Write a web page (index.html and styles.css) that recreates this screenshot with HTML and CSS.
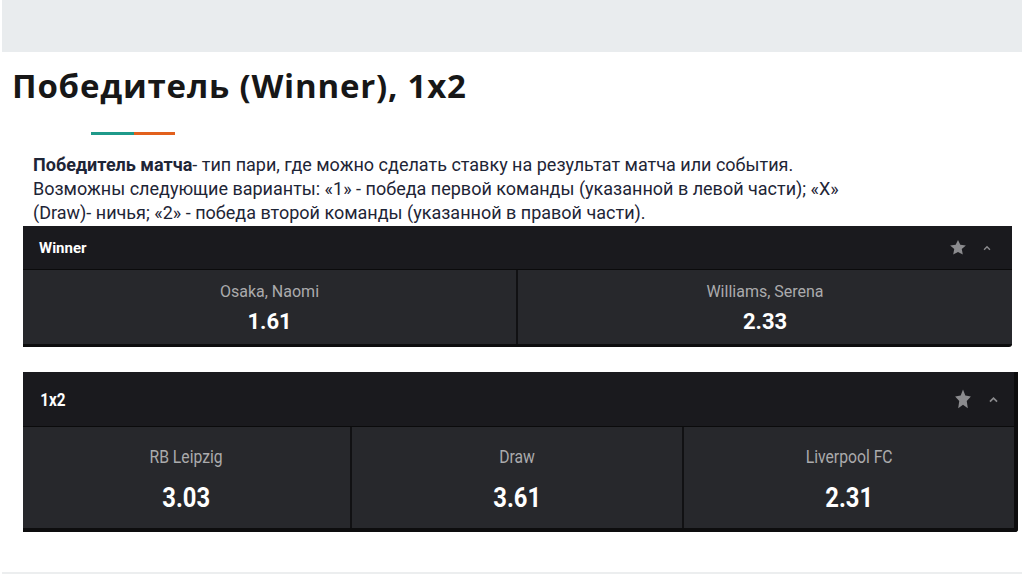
FILE: index.html
```html
<!DOCTYPE html>
<html lang="ru">
<head>
<meta charset="utf-8">
<title>Победитель (Winner), 1x2</title>
<link rel="stylesheet" href="styles.css">
</head>
<body>
<div class="topbar"></div>
<main class="content">
  <h1 class="title">Победитель (Winner), 1x2</h1>
  <div class="accent"><span class="teal"></span><span class="orange"></span></div>
  <p class="desc"><b>Победитель матча</b>- тип пари, где можно сделать ставку на результат матча или события.<br>Возможны следующие варианты: «1» - победа первой команды (указанной в левой части); «X»<br>(Draw)- ничья; «2» - победа второй команды (указанной в правой части).</p>

  <section class="market m1">
    <div class="mhead">
      <span class="mtitle">Winner</span>
      <div class="micons">
        <svg class="star" viewBox="0 0 24 24" preserveAspectRatio="none"><polygon points="12,1.5 15.09,8.26 22.5,9.27 17,14.14 18.4,22 12,18.3 5.6,22 7,14.14 1.5,9.27 8.91,8.26"/></svg>
        <svg class="chev" viewBox="0 0 24 24"><polyline points="7,15 12,10 17,15"/></svg>
      </div>
    </div>
    <div class="mbody">
      <div class="cell"><span class="name">Osaka, Naomi</span><span class="odd">1.61</span></div>
      <div class="cell"><span class="name">Williams, Serena</span><span class="odd">2.33</span></div>
    </div>
  </section>

  <section class="market m2">
    <div class="mhead">
      <span class="mtitle"><span class="cond">1x2</span></span>
      <div class="micons">
        <svg class="star" viewBox="0 0 24 24" preserveAspectRatio="none"><polygon points="12,1.5 15.09,8.26 22.5,9.27 17,14.14 18.4,22 12,18.3 5.6,22 7,14.14 1.5,9.27 8.91,8.26"/></svg>
        <svg class="chev" viewBox="0 0 24 24"><polyline points="7,15 12,10 17,15"/></svg>
      </div>
    </div>
    <div class="mbody">
      <div class="cell"><span class="name"><span class="cond">RB Leipzig</span></span><span class="odd"><span class="cond">3.03</span></span></div>
      <div class="cell"><span class="name"><span class="cond">Draw</span></span><span class="odd"><span class="cond">3.61</span></span></div>
      <div class="cell"><span class="name"><span class="cond">Liverpool FC</span></span><span class="odd"><span class="cond">2.31</span></span></div>
    </div>
  </section>
</main>
<div class="bottomline"></div>
</body>
</html>
```

FILE: styles.css
```css
* { box-sizing: border-box; }
html, body { margin: 0; padding: 0; }
body {
  width: 1024px;
  height: 574px;
  overflow: hidden;
  background: #ffffff;
  font-family: Roboto, "Liberation Sans", sans-serif;
}
.topbar {
  height: 52px;
  margin: 0 2px 0 2px;
  background: #e9ecee;
}
.content {
  height: 520px;
  display: flex;
  flex-direction: column;
}
.title {
  margin: 14px 0 0 12px;
  font-family: "Open Sans", "Liberation Sans", sans-serif;
  font-size: 33px;
  line-height: 40px;
  font-weight: 700;
  letter-spacing: 0.8px;
  color: #171717;
}
.accent {
  display: flex;
  margin: 26px 0 0 91px;
  height: 3px;
}
.accent .teal { width: 43px; background: #1f9a8a; }
.accent .orange { width: 41px; background: #e2601d; }
.desc {
  margin: 18px 0 0 33px;
  font-size: 18px;
  line-height: 24px;
  color: #1e2536;
}
.desc b { font-weight: 700; }

.market {
  margin-left: 23px;
  background: #27282c;
  display: flex;
  flex-direction: column;
  border-radius: 0 0 3px 0;
}
.m1 {
  width: 989px;
  margin-top: 1px;
  border-bottom: 3px solid #0d0d0e;
}
.m2 {
  width: 995px;
  margin-top: 25px;
  border-bottom: 4px solid #0d0d0e;
  border-right: 4px solid #0d0d0e;
}
.mhead {
  display: flex;
  align-items: center;
  justify-content: space-between;
  background: #1a1a1e;
  border-bottom: 1px solid #0b0b0c;
  padding: 0 18px 0 16px;
}
.m1 .mhead { height: 44px; }
.m2 .mhead { height: 55px; padding-left: 15px; padding-right: 12px; }
.mtitle {
  color: #ffffff;
  font-weight: 700;
}
.m1 .mtitle { font-size: 15px; }
.m2 .mtitle { font-size: 18px; }
.micons {
  display: flex;
  align-items: center;
  gap: 13px;
}
.star { fill: #8b8b8e; }
.m1 .star { width: 18px; height: 17px; }
.m2 .star { width: 18px; height: 22px; }
.chev { fill: none; stroke: #8b8b8e; stroke-width: 2.4; }
.m1 .chev { width: 14px; height: 14px; }
.m2 .chev { width: 17px; height: 17px; }

.mbody {
  display: flex;
}
.cell {
  flex: 1 1 0;
  display: flex;
  flex-direction: column;
  align-items: center;
  border-left: 2px solid #111113;
}
.cell:first-child { border-left: none; }
.m1 .cell:first-child { flex: 0 0 493px; }
.m2 .cell:first-child { flex: 0 0 327px; }
.m2 .cell:nth-child(2) { flex: 0 0 332px; }
.m1 .cell { height: 74px; padding-top: 13px; }
.m2 .cell { height: 101px; padding-top: 19px; }
.name { color: #ababad; }
.odd { color: #ffffff; font-weight: 700; }
.m1 .name { font-size: 16px; line-height: 18px; }
.m1 .odd { font-size: 22px; line-height: 26px; margin-top: 8px; }
.m2 .name { font-size: 18.5px; line-height: 22px; }
.m2 .odd { font-size: 28px; line-height: 32px; margin-top: 14px; }
.cond { display: inline-block; transform: scaleX(0.85); }

.bottomline {
  height: 2px;
  margin: 0 2px;
  background: #eceeef;
}
```
